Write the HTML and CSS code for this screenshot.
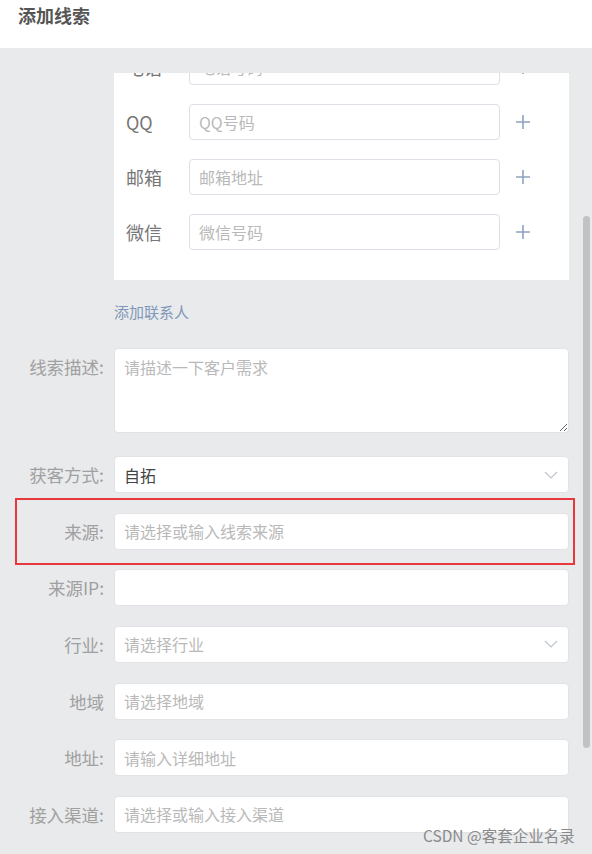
FILE: index.html
```html
<!DOCTYPE html>
<html lang="zh-CN">
<head>
<meta charset="utf-8">
<title>添加线索</title>
<link rel="stylesheet" href="styles.css">
</head>
<body>
<div class="header"><h1 class="title">添加线索</h1></div>
<div class="body">
  <div class="viewport">
    <div class="content">
      <div class="card">
        <div class="crow"><span class="clabel">电话</span><input class="cinput" placeholder="电话号码"><span class="plus"><svg width="16" height="16" viewBox="0 0 16 16"><path d="M8 1v14M1 8h14" stroke="#8ea2bd" stroke-width="1.6"/></svg></span></div>
        <div class="crow"><span class="clabel">QQ</span><input class="cinput" placeholder="QQ号码"><span class="plus"><svg width="16" height="16" viewBox="0 0 16 16"><path d="M8 1v14M1 8h14" stroke="#8ea2bd" stroke-width="1.6"/></svg></span></div>
        <div class="crow"><span class="clabel">邮箱</span><input class="cinput" placeholder="邮箱地址"><span class="plus"><svg width="16" height="16" viewBox="0 0 16 16"><path d="M8 1v14M1 8h14" stroke="#8ea2bd" stroke-width="1.6"/></svg></span></div>
        <div class="crow"><span class="clabel">微信</span><input class="cinput" placeholder="微信号码"><span class="plus"><svg width="16" height="16" viewBox="0 0 16 16"><path d="M8 1v14M1 8h14" stroke="#8ea2bd" stroke-width="1.6"/></svg></span></div>
      </div>
      <div class="addlink">添加联系人</div>
      <div class="frow frow-area"><span class="flabel">线索描述:</span><textarea class="farea" placeholder="请描述一下客户需求"></textarea></div>
      <div class="frow"><span class="flabel">获客方式:</span><div class="fselect"><span class="val">自拓</span><svg class="chev" width="14" height="8" viewBox="0 0 14 8"><path d="M1 1l6 6 6-6" fill="none" stroke="#c0c4cc" stroke-width="1.2"/></svg></div></div>
      <div class="frow marked"><span class="flabel">来源:</span><input class="finput" placeholder="请选择或输入线索来源"></div>
      <div class="frow"><span class="flabel">来源IP:</span><input class="finput"></div>
      <div class="frow"><span class="flabel">行业:</span><div class="fselect"><span class="ph">请选择行业</span><svg class="chev" width="14" height="8" viewBox="0 0 14 8"><path d="M1 1l6 6 6-6" fill="none" stroke="#c0c4cc" stroke-width="1.2"/></svg></div></div>
      <div class="frow"><span class="flabel">地域</span><input class="finput" placeholder="请选择地域"></div>
      <div class="frow"><span class="flabel">地址:</span><input class="finput" placeholder="请输入详细地址"></div>
      <div class="frow"><span class="flabel">接入渠道:</span><input class="finput" placeholder="请选择或输入接入渠道"></div>
    </div>
  </div>
  <div class="thumb"></div>
  <div class="watermark">CSDN @客套企业名录</div>
</div>
</body>
</html>
```
FILE: styles.css
```css
* { box-sizing: border-box; }
html, body { margin: 0; padding: 0; }
body {
  width: 592px;
  height: 854px;
  overflow: hidden;
  font-family: "Noto Sans CJK SC", "Noto Sans", sans-serif;
  background: #e9eaec;
}
.header {
  height: 48px;
  background: #fff;
  padding-left: 18px;
}
.title {
  margin: 0;
  font-size: 18px;
  line-height: 30px;
  font-weight: bold;
  color: #555;
}
.body {
  position: relative;
  height: 806px;
  padding-top: 25px;
}
.viewport {
  height: 781px;
  overflow: hidden;
}
.content {
  margin-top: -44px;
}
.card {
  margin-left: 114px;
  width: 455px;
  background: #fff;
  padding: 20px 0 30px 12px;
  display: flex;
  flex-direction: column;
  gap: 19px;
}
.crow {
  display: flex;
  align-items: center;
  height: 36px;
}
.clabel {
  width: 63px;
  font-size: 18px;
  color: #777;
}
.cinput {
  width: 311px;
  height: 36px;
  border: 1px solid #dcdfe6;
  border-radius: 4px;
  padding: 0 9px;
  font-family: inherit;
  font-size: 16px;
  outline: none;
}
.cinput::placeholder, .finput::placeholder, .farea::placeholder { color: #b9b9b9; }
.plus {
  display: flex;
  margin-left: 15px;
}
.addlink {
  margin: 20px 0 0 114px;
  height: 24px;
  line-height: 24px;
  font-size: 15px;
  color: #7f98b9;
}
.frow {
  display: flex;
  align-items: center;
  height: 37px;
  margin-top: 19.67px;
  position: relative;
}
.frow-area {
  margin-top: 24px;
  height: 85px;
  align-items: flex-start;
}
.frow-area + .frow { margin-top: 23px; }
.flabel {
  width: 104px;
  text-align: right;
  font-size: 17.5px;
  line-height: 37px;
  color: #a0a0a0;
  margin-right: 10px;
  flex: none;
}
.finput, .farea, .fselect {
  width: 455px;
  background: #fff;
  border: 1px solid #e2e3e6;
  border-radius: 4px;
  font-family: inherit;
  font-size: 16px;
  outline: none;
}
.finput {
  height: 37px;
  padding: 0 9px;
}
.farea {
  height: 85px;
  padding: 7px 9px;
  resize: vertical;
  line-height: 22px;
}
.fselect {
  height: 37px;
  padding: 0 10px 0 9px;
  display: flex;
  align-items: center;
  justify-content: space-between;
}
.fselect .val { color: #444; }
.fselect .ph { color: #b9b9b9; }
.marked::after {
  content: "";
  position: absolute;
  left: 15px;
  top: -15px;
  width: 556px;
  height: 63px;
  border: 2.5px solid #e8383d;
  pointer-events: none;
}
.thumb {
  position: absolute;
  left: 583px;
  top: 168px;
  width: 7px;
  height: 532px;
  border-radius: 4px;
  background: #c1c2c4;
}
.watermark {
  position: absolute;
  left: 423px;
  top: 777px;
  font-size: 15.5px;
  line-height: 20px;
  color: #8a8a8a;
}
```
